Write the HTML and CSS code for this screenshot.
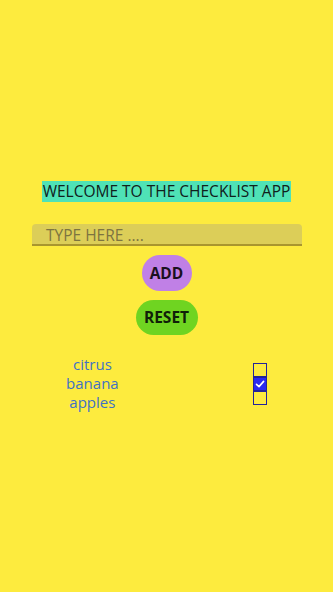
FILE: index.html
```html
<!DOCTYPE html>
<html>
<head>
<meta charset="utf-8">
<link rel="stylesheet" href="styles.css">
</head>
<body>
<div class="app">
  <div class="title">WELCOME TO THE CHECKLIST APP</div>
  <div class="input">TYPE HERE ....</div>
  <div class="btn add">ADD</div>
  <div class="btn reset">RESET</div>
  <div class="list">
    <div class="names">
      <div>citrus</div>
      <div>banana</div>
      <div>apples</div>
    </div>
    <div class="boxes">
      <div class="box"></div>
      <div class="box checked">
        <svg viewBox="0 0 12 12" width="12" height="12"><path d="M2.5 6.3 L5 8.6 L9.6 3.4" fill="none" stroke="#fff" stroke-width="1.6" stroke-linecap="round" stroke-linejoin="round"/></svg>
      </div>
      <div class="box"></div>
    </div>
  </div>
</div>
</body>
</html>
```
FILE: styles.css
```css
html, body {
  margin: 0;
  padding: 0;
  height: 100%;
}
body {
  background: #fdeb3e;
  font-family: "Open Sans", sans-serif;
}
.app {
  display: flex;
  flex-direction: column;
  align-items: center;
  padding-top: 181px;
}
.title {
  background: #4fe2b6;
  color: #10201c;
  font-size: 15.5px;
  line-height: 21px;
  padding: 0 1px;
}
.input {
  margin-top: 22px;
  width: 256px;
  height: 19px;
  padding: 1px 0 0 14px;
  background: #dcce58;
  border-bottom: 2px solid #a9962e;
  border-radius: 4px 4px 0 0;
  color: #7d7440;
  font-size: 15.5px;
  line-height: 21px;
  overflow: visible;
  align-self: flex-start;
  margin-left: 32px;
}
.btn {
  height: 36px;
  border-radius: 18px;
  font-weight: bold;
  font-size: 15.5px;
  line-height: 36px;
  color: #1a1020;
  text-align: center;
  box-sizing: border-box;
}
.add {
  margin-top: 9px;
  width: 50px;
  background: #c080e6;
}
.reset {
  margin-top: 9px;
  width: 62px;
  height: 35px;
  line-height: 35px;
  background: #6fd421;
  color: #102008;
}
.list {
  margin-top: 20px;
  align-self: stretch;
  display: flex;
  justify-content: space-around;
  align-items: center;
}
.names {
  color: #3f72c4;
  font-size: 15px;
  line-height: 19px;
  text-align: center;
}
.boxes {
  display: flex;
  flex-direction: column;
  margin-left: 2px;
}
.box {
  width: 14px;
  height: 14px;
  box-sizing: border-box;
  border: 1.7px solid #23239a;
  display: flex;
  align-items: center;
  justify-content: center;
}
.box.checked {
  background: #2b2bf0;
}
.box svg { display: block; }
```
